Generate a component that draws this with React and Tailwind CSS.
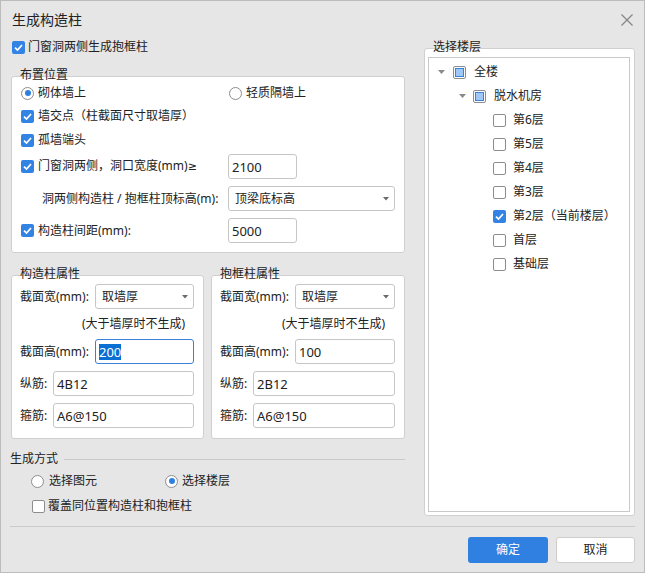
import React from "react";

const FONT = "font-['Noto_Sans','Noto_Sans_CJK_SC',sans-serif]";

function Check({ checked }) {
  if (checked) {
    return (
      <span className="flex h-[13px] w-[13px] shrink-0 items-center justify-center rounded-[2px] bg-[#3383e4]">
        <svg width="11" height="11" viewBox="0 0 11 11">
          <path d="M2 5.6 L4.5 8 L9 3" fill="none" stroke="#fff" strokeWidth="1.7" />
        </svg>
      </span>
    );
  }
  return <span className="h-[13px] w-[13px] shrink-0 rounded-[2px] border border-[#8d8d8d] bg-white" />;
}

function Partial() {
  return (
    <span className="flex h-[13px] w-[13px] shrink-0 items-center justify-center rounded-[2px] border border-[#8d8d8d] bg-white">
      <span className="h-[9px] w-[9px] border border-[#3a82de] bg-[#9fc8f6]" />
    </span>
  );
}

function Radio({ on }) {
  return (
    <span className="flex h-[13px] w-[13px] shrink-0 items-center justify-center rounded-full border border-[#8d8d8d] bg-white">
      {on && <span className="h-[6px] w-[6px] rounded-full bg-[#2f7fe0]" />}
    </span>
  );
}

function Caret() {
  return (
    <svg width="6" height="4" viewBox="0 0 6 4" className="shrink-0">
      <path d="M0 0 H6 L3 3.5 Z" fill="#6b6b6b" />
    </svg>
  );
}

function Input({ value, className = "", focus }) {
  return (
    <div
      className={`flex h-[25px] items-center rounded-[3px] border bg-white px-[3px] text-[13px] ${
        focus ? "border-[#3a7fd9]" : "border-[#c6c6c6]"
      } ${className}`}
    >
      {focus ? <span className="bg-[#0a6fd3] leading-[16px] text-white">{value}</span> : value}
    </div>
  );
}

function Select({ value, className = "" }) {
  return (
    <div
      className={`flex h-[25px] items-center justify-between rounded-[3px] border border-[#c6c6c6] bg-white pl-[6px] pr-[5px] ${className}`}
    >
      <span>{value}</span>
      <Caret />
    </div>
  );
}

function Panel({ title, className = "", children }) {
  return (
    <div className={`relative rounded-[3px] border border-[#d0d0d0] bg-white ${className}`}>
      <span className="absolute left-[8px] top-[-10px] leading-[16px]">{title}</span>
      {children}
    </div>
  );
}

function PropPanel({ title, width, h, bar, hoop }) {
  return (
    <Panel title={title} className={`${width} flex flex-col pl-[8px] pr-[9px] pt-[8px] pb-[10px]`}>
      <div className="flex h-[25px] items-center">
        <span className="w-[75px] shrink-0">截面宽(mm):</span>
        <Select value="取墙厚" className="flex-1" />
      </div>
      <div className="flex h-[30px] items-center pl-[62px]">(大于墙厚时不生成)</div>
      <div className="flex h-[25px] items-center">
        <span className="w-[75px] shrink-0">截面高(mm):</span>
        <Input value={h} focus={h === "200"} className="flex-1" />
      </div>
      <div className="mt-[7px] flex h-[25px] items-center">
        <span className="w-[33px] shrink-0">纵筋:</span>
        <Input value={bar} className="flex-1" />
      </div>
      <div className="mt-[7px] flex h-[25px] items-center">
        <span className="w-[33px] shrink-0">箍筋:</span>
        <Input value={hoop} className="flex-1" />
      </div>
    </Panel>
  );
}

const floors = [
  { name: "第6层" },
  { name: "第5层" },
  { name: "第4层" },
  { name: "第3层" },
  { name: "第2层（当前楼层）", checked: true },
  { name: "首层" },
  { name: "基础层" },
];

function Tri() {
  return (
    <svg width="7" height="4" viewBox="0 0 7 4" className="shrink-0">
      <path d="M0 0 H7 L3.5 4 Z" fill="#8a8a8a" />
    </svg>
  );
}

export default function App() {
  return (
    <div
      className={`${FONT} flex h-[573px] w-[645px] flex-col border border-[#bcbcbc] bg-[#e6e6e6] text-[12px] leading-[16px] text-[#222]`}
    >
      {/* title bar */}
      <div className="flex h-[37px] shrink-0 items-center justify-between pl-[11px] pr-[11px]">
        <span className="text-[14px]">生成构造柱</span>
        <svg width="12" height="12" viewBox="0 0 12 12">
          <path d="M0.5 0.5 L11.5 11.5 M11.5 0.5 L0.5 11.5" stroke="#858585" strokeWidth="1.2" />
        </svg>
      </div>

      <div className="flex">
        {/* left column */}
        <div className="flex w-[404px] shrink-0 flex-col pl-[10px]">
          <div className="ml-[1px] flex h-[18px] items-center gap-[3px]">
            <Check checked />
            <span>门窗洞两侧生成抱框柱</span>
          </div>

          <Panel title="布置位置" className="mt-[20px] w-[394px] pl-[9px] pr-[9px] pt-[5px] pb-[9px]">
            <div className="flex h-[22px] items-center">
              <div className="flex w-[207px] items-center gap-[4px]">
                <Radio on />
                <span>砌体墙上</span>
              </div>
              <div className="ml-[1px] flex items-center gap-[4px]">
                <Radio />
                <span>轻质隔墙上</span>
              </div>
            </div>
            <div className="flex h-[24px] items-center gap-[4px]">
              <Check checked />
              <span>墙交点（柱截面尺寸取墙厚）</span>
            </div>
            <div className="flex h-[24px] items-center gap-[4px]">
              <Check checked />
              <span>孤墙端头</span>
            </div>
            <div className="mt-[2px] flex h-[25px] items-center">
              <div className="flex w-[207px] items-center gap-[4px]">
                <Check checked />
                <span>
                  门窗洞两侧，洞口宽度(mm)<span className="font-['DejaVu_Sans',sans-serif] text-[11px]">≥</span>
                </span>
              </div>
              <Input value="2100" className="w-[69px]" />
            </div>
            <div className="mt-[7px] flex h-[25px] items-center">
              <div className="w-[207px] pl-[21px]">洞两侧构造柱 / 抱框柱顶标高(m):</div>
              <Select value="顶梁底标高" className="flex-1" />
            </div>
            <div className="mt-[7px] flex h-[25px] items-center">
              <div className="flex w-[207px] items-center gap-[4px]">
                <Check checked />
                <span>构造柱间距(mm):</span>
              </div>
              <Input value="5000" className="w-[69px]" />
            </div>
          </Panel>

          <div className="mt-[22px] flex gap-[7px]">
            <PropPanel title="构造柱属性" width="w-[193px]" h="200" bar="4B12" hoop="A6@150" />
            <PropPanel title="抱框柱属性" width="w-[194px]" h="100" bar="2B12" hoop="A6@150" />
          </div>

          <div className="-ml-[1px] mt-[12px] flex h-[16px] items-center gap-[6px]">
            <span>生成方式</span>
            <span className="h-px flex-1 bg-[#c9c9c9]" />
          </div>
          <div className="ml-[20px] mt-[4px] flex h-[20px] items-center">
            <div className="flex w-[134px] items-center gap-[5px]">
              <Radio />
              <span>选择图元</span>
            </div>
            <div className="flex items-center gap-[4px]">
              <Radio on />
              <span>选择楼层</span>
            </div>
          </div>
          <div className="ml-[21px] mt-[5px] flex h-[20px] items-center gap-[3px]">
            <Check />
            <span>覆盖同位置构造柱和抱框柱</span>
          </div>
        </div>

        {/* right column */}
        <Panel
          title="选择楼层"
          className="ml-[19px] mt-[10px] flex h-[468px] w-[211px] flex-col pl-[3px] pr-[4px] pt-[8px] pb-[3px]"
        >
          <div className="flex-1 border border-[#c9c9c9] pt-[2px]">
            <div className="flex h-[24px] items-center pl-[9px]">
              <Tri />
              <span className="ml-[8px]">
                <Partial />
              </span>
              <span className="ml-[8px]">全楼</span>
            </div>
            <div className="flex h-[24px] items-center pl-[30px]">
              <Tri />
              <span className="ml-[7px]">
                <Partial />
              </span>
              <span className="ml-[8px]">脱水机房</span>
            </div>
            {floors.map((f) => (
              <div key={f.name} className="flex h-[24px] items-center gap-[7px] pl-[64px]">
                <Check checked={f.checked} />
                <span>{f.name}</span>
              </div>
            ))}
          </div>
        </Panel>
      </div>

      <div className="mx-[9px] mt-[10px] h-px bg-[#cbcbcb]" />

      <div className="mt-[10px] flex justify-end gap-[8px] pr-[9px]">
        <button className="flex h-[26px] w-[80px] items-center justify-center rounded-[3px] bg-[#2f80e1] text-white">
          确定
        </button>
        <button className="flex h-[26px] w-[79px] items-center justify-center rounded-[3px] border border-[#cdcdcd] bg-white">
          取消
        </button>
      </div>
    </div>
  );
}
